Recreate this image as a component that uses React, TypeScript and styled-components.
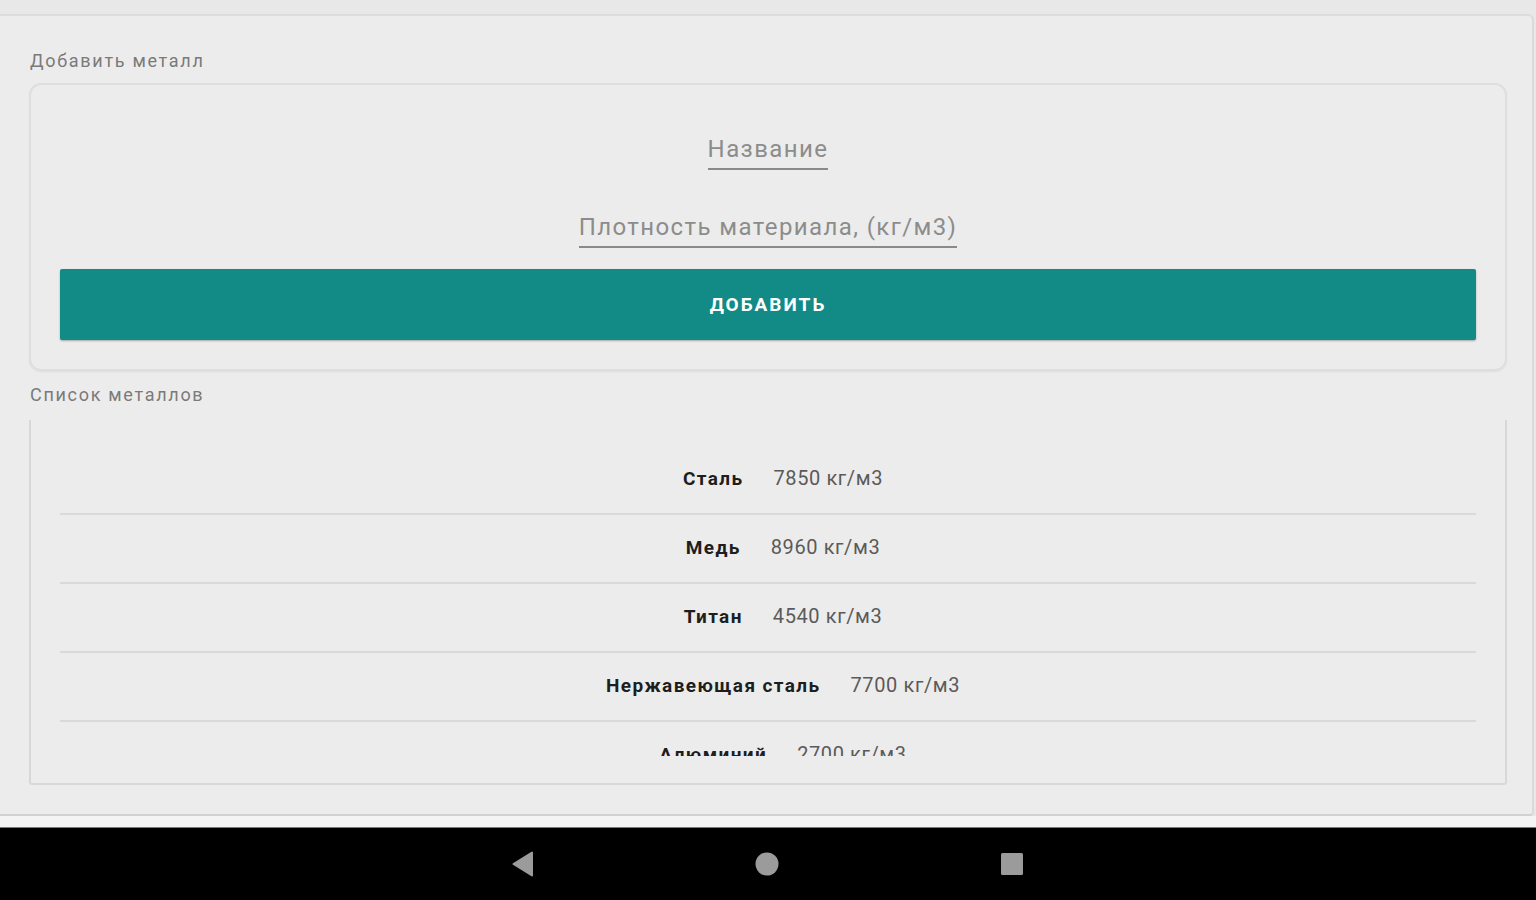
import styled, { createGlobalStyle } from 'styled-components';

const GlobalStyle = createGlobalStyle`
  html, body {
    margin: 0;
    padding: 0;
    background: #e8e8e8;
  }
  body {
    font-family: Roboto, "Noto Sans", "Liberation Sans", sans-serif;
  }
`;

interface Metal {
  name: string;
  density: number;
}

const metals: Metal[] = [
  { name: 'Сталь', density: 7850 },
  { name: 'Медь', density: 8960 },
  { name: 'Титан', density: 4540 },
  { name: 'Нержавеющая сталь', density: 7700 },
  { name: 'Алюминий', density: 2700 },
];

export default function App() {
  return (
    <>
      <GlobalStyle />
      <StyledScreen>
        <StyledStatusGap />
        <StyledFrame>
          <StyledSectionLabel>Добавить металл</StyledSectionLabel>
          <StyledFormCard>
            <StyledField>Название</StyledField>
            <StyledField $gap={42}>Плотность материала, (кг/м3)</StyledField>
            <StyledButton type="button">Добавить</StyledButton>
          </StyledFormCard>

          <StyledSectionLabel $top={14}>Список металлов</StyledSectionLabel>
          <StyledListCard>
            {/* список прокручен, последняя строка обрезана краем */}
            <StyledViewport>
              {metals.map((metal) => (
                <StyledRow key={metal.name}>
                  <StyledName>{metal.name}</StyledName>
                  <StyledDensity>{metal.density} кг/м3</StyledDensity>
                </StyledRow>
              ))}
            </StyledViewport>
          </StyledListCard>
        </StyledFrame>
        <StyledBottomBand />
        <StyledNavBar>
          <svg width="22" height="26" viewBox="0 0 22 26">
            <path d="M20 1.5 L20 24.5 L1.5 13 Z" fill="#9b9b9b" strokeLinejoin="round" stroke="#9b9b9b" strokeWidth="2" />
          </svg>
          <svg width="26" height="26" viewBox="0 0 26 26">
            <circle cx="13" cy="13" r="11.5" fill="#9b9b9b" />
          </svg>
          <svg width="24" height="24" viewBox="0 0 24 24">
            <rect x="1" y="1" width="22" height="22" rx="1.5" fill="#9b9b9b" />
          </svg>
        </StyledNavBar>
      </StyledScreen>
    </>
  );
}

const StyledScreen = styled.div`
  display: flex;
  flex-direction: column;
  width: 1536px;
  height: 900px;
  overflow: hidden;
`;

const StyledStatusGap = styled.div`
  height: 14px;
  flex-shrink: 0;
  background: #e8e8e8;
`;

const StyledFrame = styled.div`
  width: 1534px;
  box-sizing: border-box;
  display: flex;
  flex-direction: column;
  align-items: stretch;
  padding: 0 25px 29px 29px;
  background: #ececec;
  border-top: 2px solid #dcdcdc;
  border-bottom: 2px solid #d2d2d2;
  border-right: 2px solid #dadada;
  border-radius: 0 6px 4px 0;
`;

const StyledSectionLabel = styled.div<{ $top?: number }>`
  margin: ${(p) => p.$top ?? 35}px 0 ${(p) => (p.$top ? 15 : 12)}px 1px;
  font-size: 18px;
  line-height: 20px;
  letter-spacing: 1.7px;
  color: #7a7a7a;
`;

const StyledFormCard = styled.div`
  display: flex;
  flex-direction: column;
  align-items: center;
  padding: 49px 29px 29px;
  border: 2px solid #dedede;
  border-radius: 12px;
  box-shadow: 0 1px 2px rgba(0, 0, 0, 0.06);
`;

const StyledField = styled.div<{ $gap?: number }>`
  margin-top: ${(p) => p.$gap ?? 0}px;
  padding-bottom: 4px;
  font-size: 24px;
  line-height: 30px;
  letter-spacing: 1.4px;
  color: #8c8c8c;
  border-bottom: 2px solid #8a8a8a;
`;

const StyledButton = styled.button`
  align-self: stretch;
  margin-top: 21px;
  height: 71px;
  border: none;
  border-radius: 2px;
  background: #128a85;
  box-shadow: 0 1px 2px rgba(0, 0, 0, 0.3);
  color: #ffffff;
  font-family: Roboto, "Noto Sans", sans-serif;
  font-size: 19px;
  font-weight: 700;
  letter-spacing: 2px;
  text-transform: uppercase;
`;

const StyledListCard = styled.div`
  padding: 0 29px 27px;
  border: 2px solid #d8d8d8;
  border-top: none;
  border-radius: 0 0 3px 3px;
`;

const StyledViewport = styled.div`
  height: 310px;
  padding-top: 26px;
  overflow: hidden;
`;

const StyledRow = styled.div`
  height: 64px;
  padding: 0 0 3px 30px;
  display: flex;
  align-items: center;
  justify-content: center;
  gap: 30px;
  border-bottom: 2px solid #d9d9d9;
`;

const StyledName = styled.span`
  font-size: 19px;
  font-weight: 700;
  letter-spacing: 1.4px;
  color: #1e1e1e;
`;

const StyledDensity = styled.span`
  font-size: 20px;
  letter-spacing: 0.6px;
  color: #5a5a5a;
`;

const StyledBottomBand = styled.div`
  height: 11px;
  flex-shrink: 0;
  background: #f4f4f4;
  border-bottom: 1px solid #7a7a7a;
`;

const StyledNavBar = styled.div`
  flex: 1;
  display: flex;
  align-items: center;
  justify-content: center;
  gap: 220px;
  background: #000000;
`;
